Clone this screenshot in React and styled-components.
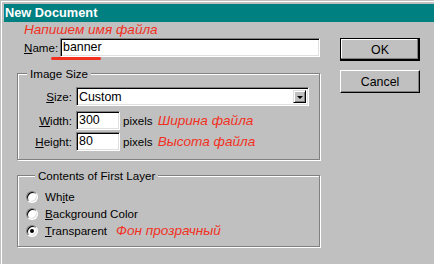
import React from 'react'
import styled, { createGlobalStyle, css } from 'styled-components'

const GlobalStyle = createGlobalStyle`
  html, body {
    margin: 0;
    padding: 0;
    background: #c0c0c0;
  }
  body {
    font-family: "Liberation Sans", Arial, sans-serif;
    font-size: 11.6px;
    color: #000;
  }
`

const sunken = css`
  box-sizing: border-box;
  border: 1px solid;
  border-color: #808080 #fff #fff #808080;
  box-shadow: inset 1px 1px 0 #000, inset -1px -1px 0 #dfdfdf;
  background: #fff;
`

const etched = css`
  border: 1px solid #808080;
  box-shadow: 1px 1px 0 #fff, inset 1px 1px 0 #fff;
`

const Window = styled.div`
  width: 434px;
  height: 264px;
  box-sizing: border-box;
  padding: 1px 0 0 1px;
  overflow: hidden;
  background: #c0c0c0;
`

const Frame = styled.div`
  height: 100%;
  box-sizing: border-box;
  border-top: 1px solid #fff;
  border-left: 1px solid #fff;
  padding: 2px 0 0 2px;
`

const TitleBar = styled.div`
  height: 18px;
  line-height: 18px;
  padding-left: 1px;
  background: #008080;
  color: #fff;
  font-weight: bold;
  font-size: 12.8px;
`

const Body = styled.div`
  display: flex;
  gap: 20px;
  padding-left: 13px;
`

const LeftColumn = styled.div`
  width: 303px;
  display: flex;
  flex-direction: column;
`

const Note = styled.span`
  color: #f2301f;
  font-style: italic;
  font-size: 13.6px;
  white-space: nowrap;
  margin-left: ${p => p.$gap || 0}px;
`

const Hint = styled.div`
  height: 16px;
  line-height: 16px;
  padding-left: 7px;
`

const NameRow = styled.div`
  position: relative;
  display: flex;
  align-items: center;
  height: 19px;
  padding-left: 7px;
`

const NameLabel = styled.span`
  width: 36px;
`

const Mark = styled.div`
  position: absolute;
  left: 34px;
  top: 19px;
  width: 50px;
  height: 3px;
  border-radius: 2px;
  background: #f2301f;
`

const Field = styled.div`
  ${sunken};
  height: 19px;
  line-height: 17px;
  padding-left: 2px;
  width: ${p => (p.$width ? `${p.$width}px` : 'auto')};
  flex: ${p => (p.$width ? 'none' : 1)};
  font-size: 12.4px;
`

const Group = styled.fieldset`
  ${etched};
  margin: ${p => p.$mt}px 0 0 0;
  min-width: 0;
  padding: ${p => p.$pad};
`

const Legend = styled.legend`
  margin-left: 9px;
  padding: 0 3px;
  line-height: 13px;
  background: #c0c0c0;
`

const Row = styled.div`
  display: flex;
  align-items: center;
  height: ${p => p.$h || 19}px;
  margin-bottom: ${p => p.$mb || 0}px;
`

const Label = styled.span`
  width: 54px;
  margin-right: 4px;
  text-align: right;
`

const Select = styled.div`
  ${sunken};
  flex: 1;
  height: 19px;
  display: flex;
  align-items: stretch;
  padding: 2px;
  font-size: 12.4px;
`

const SelectValue = styled.span`
  flex: 1;
  line-height: 15px;
`

const DropButton = styled.div`
  width: 13px;
  box-sizing: border-box;
  background: #c0c0c0;
  border: 1px solid;
  border-color: #dfdfdf #000 #000 #dfdfdf;
  box-shadow: inset 1px 1px 0 #fff, inset -1px -1px 0 #808080;
  display: flex;
  align-items: center;
  justify-content: center;

  &::after {
    content: '';
    border-left: 3px solid transparent;
    border-right: 3px solid transparent;
    border-top: 3px solid #000;
    margin-top: 1px;
  }
`

const Unit = styled.span`
  margin-left: 3px;
`

const RadioRow = styled.div`
  display: flex;
  align-items: center;
  height: 17px;
`

const Radio = styled.span`
  width: 12px;
  height: 12px;
  box-sizing: border-box;
  border-radius: 50%;
  border: 1px solid;
  border-color: #808080 #fff #fff #808080;
  box-shadow: inset 1px 1px 0 #000, inset -1px -1px 0 #dfdfdf;
  background: #fff;
  margin-right: 7px;
  display: flex;
  align-items: center;
  justify-content: center;

  &::after {
    content: '';
    width: 4px;
    height: 4px;
    border-radius: 50%;
    background: ${p => (p.$checked ? '#000' : 'transparent')};
  }
`

const RightColumn = styled.div`
  display: flex;
  flex-direction: column;
  gap: 9px;
  padding-top: 16px;
`

const Button = styled.div`
  width: 80px;
  height: 23px;
  box-sizing: border-box;
  display: flex;
  align-items: center;
  justify-content: center;
  background: #c0c0c0;
  font-size: 12.4px;
  border: 1px solid;
  border-color: #fff #000 #000 #fff;
  box-shadow: inset -1px -1px 0 #808080;

  ${p => p.$default && css`
    border-color: #000;
    box-shadow: inset -1px -1px 0 #000, inset -2px -2px 0 #808080, inset 1px 1px 0 #fff;
  `}
`

const App = () => {
  return (
    <>
      <GlobalStyle />
      <Window>
        <Frame>
          <TitleBar>New Document</TitleBar>
          <Body>
            <LeftColumn>
              <Hint><Note>Напишем имя файла</Note></Hint>
              <NameRow>
                <NameLabel><u>N</u>ame:</NameLabel>
                <Field>banner</Field>
                <Mark />
              </NameRow>

              <Group $mt={10} $pad="7px 10px 8px 0">
                <Legend>Image Size</Legend>
                <Row $mb={5}>
                  <Label><u>S</u>ize:</Label>
                  <Select>
                    <SelectValue>Custom</SelectValue>
                    <DropButton />
                  </Select>
                </Row>
                <Row $mb={2}>
                  <Label><u>W</u>idth:</Label>
                  <Field $width={44}>300</Field>
                  <Unit>pixels</Unit>
                  <Note $gap={5}>Ширина файла</Note>
                </Row>
                <Row>
                  <Label><u>H</u>eight:</Label>
                  <Field $width={44}>80</Field>
                  <Unit>pixels</Unit>
                  <Note $gap={5}>Высота файла</Note>
                </Row>
              </Group>

              <Group $mt={9} $pad="6px 0 7px 8px">
                <Legend>Contents of First Layer</Legend>
                <RadioRow>
                  <Radio />
                  <span>Wh<u>i</u>te</span>
                </RadioRow>
                <RadioRow>
                  <Radio />
                  <span><u>B</u>ackground Color</span>
                </RadioRow>
                <RadioRow>
                  <Radio $checked />
                  <span><u>T</u>ransparent</span>
                  <Note $gap={9}>Фон прозрачный</Note>
                </RadioRow>
              </Group>
            </LeftColumn>

            <RightColumn>
              <Button $default>OK</Button>
              <Button>Cancel</Button>
            </RightColumn>
          </Body>
        </Frame>
      </Window>
    </>
  )
}

export default App
